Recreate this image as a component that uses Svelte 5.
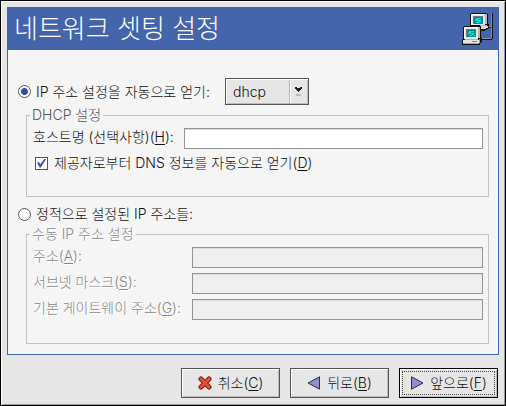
<script lang="ts">
  let mode: string = $state('auto');
  let protocol: string = $state('dhcp');
  let hostname: string = $state('');
  let autoDns: boolean = $state(true);

  const fields = [
    { id: 'address', label: '주소', key: 'A' },
    { id: 'netmask', label: '서브넷 마스크', key: 'S' },
    { id: 'gateway', label: '기본 게이트웨이 주소', key: 'G' }
  ];
</script>

<div class="window">
  <main class="panel">
    <header>
      <h1>네트워크 셋팅 설정</h1>
      <svg class="logo" viewBox="0 0 32 32" shape-rendering="crispEdges" aria-hidden="true">
        <!-- cable -->
        <path d="M30 0h1v26h-1v1H19v-1h11z M26 13h4v2h-4z" fill="#111" />
        <path d="M29 0h1v25h-1z M19 25h10v1H19z M27 13h2v1h-2z" fill="#8d8d8d" />
        <!-- back computer -->
        <path d="M9 0h16v1h1v10h1v5h-2v1h-2v1h-5V13H8V1h1z" fill="#111" />
        <path d="M9 1h14v11H9z" fill="#e6e6e6" />
        <path d="M9 1h14v1H9z M9 2h1v10H9z" fill="#fff" />
        <path d="M23 1h2v10h-2z M18 12h7v1h-7z" fill="#b9b9b9" />
        <path d="M19 13h7v2h-2v1h-5z" fill="#d8d8d8" />
        <path d="M11 3h10v8H11z" fill="#777" />
        <path d="M12 4h9v7h-9z" fill="#008f8f" />
        <path d="M14 5h5v1h-5z M13 6h3v2h-3z M16 7h3v2h-3z M14 9h3v1h-3z M19 9h1v1h-1z" fill="#00dcdc" />
        <!-- front computer -->
        <path d="M2 13h16v1h1v11h1v4h-1v1h-1v2H0v-6h1V14h1z" fill="#111" />
        <path d="M2 14h14v12H2z" fill="#e6e6e6" />
        <path d="M2 14h14v1H2z M2 15h1v11H2z" fill="#fff" />
        <path d="M16 14h2v11h-2z M3 26h13v1H3z" fill="#b5b5b5" />
        <path d="M1 27h16v3H1z" fill="#e4e4e4" />
        <path d="M1 30h16v1H1z M17 26h1v4h-1z" fill="#a3a3a3" />
        <path d="M10 28h5v1h-5z" fill="#888" />
        <path d="M4 16h10v8H4z" fill="#777" />
        <path d="M5 17h9v7H5z" fill="#008f8f" />
        <path d="M7 18h5v1H7z M6 19h3v2H6z M9 20h3v2H9z M7 22h3v1H7z M12 22h1v1h-1z" fill="#00dcdc" />
      </svg>
    </header>

    <form id="network">
      <div class="choice auto">
        <input type="radio" id="auto" name="mode" value="auto" bind:group={mode} />
        <label for="auto">IP 주소 설정을 자동으로 얻기:</label>
        <span class="combo">
          <select bind:value={protocol} aria-label="IP">
            <option value="dhcp">dhcp</option>
            <option value="bootp">bootp</option>
            <option value="dialup">dialup</option>
          </select>
          <span class="arrow">
            <svg viewBox="0 0 7 9" width="7" height="9" shape-rendering="crispEdges">
              <path d="M0 0h2v1h3V0h2v2H6v1H5v1H4v1H3V4H2V3H1V2H0z" fill="#222" />
              <path d="M1 7h5v2H1z" fill="#bbb" />
            </svg>
          </span>
        </span>
      </div>

      <fieldset>
        <legend>DHCP 설정</legend>
        <div class="row host">
          <label for="hostname">호스트명 (선택사항)(<u>H</u>):</label>
          <input type="text" id="hostname" bind:value={hostname} />
        </div>
        <div class="check">
          <input type="checkbox" id="dns" bind:checked={autoDns} />
          <label for="dns">제공자로부터 DNS 정보를 자동으로 얻기(<u>D</u>)</label>
        </div>
      </fieldset>

      <div class="choice">
        <input type="radio" id="static" name="mode" value="static" bind:group={mode} />
        <label for="static">정적으로 설정된 IP 주소들:</label>
      </div>

      <fieldset class="manual" disabled={mode !== 'static'}>
        <legend>수동 IP 주소 설정</legend>
        {#each fields as field}
          <div class="row">
            <label for={field.id}>{field.label}(<u>{field.key}</u>):</label>
            <input type="text" id={field.id} />
          </div>
        {/each}
      </fieldset>
    </form>
  </main>

  <div class="buttons">
    <button type="button">
      <svg viewBox="0 0 14 14" width="14" height="14">
        <path d="M3 3l8 8M11 3l-8 8" stroke="#7d2015" stroke-width="5" stroke-linecap="round" />
        <path d="M3 3l8 8M11 3l-8 8" stroke="#e8502f" stroke-width="3" stroke-linecap="round" />
      </svg>
      <span>취소(<u>C</u>)</span>
    </button>
    <button type="button">
      <svg viewBox="0 0 14 14" width="14" height="14">
        <path d="M12.500 .8v12.400L1 7z" fill="#8c90cf" stroke="#2c2c48" />
      </svg>
      <span>뒤로(<u>B</u>)</span>
    </button>
    <button type="submit" form="network" class="default">
      <svg viewBox="0 0 14 14" width="14" height="14">
        <path d="M1.500 .8v12.400L13 7z" fill="#8c90cf" stroke="#2c2c48" />
      </svg>
      <span>앞으로(<u>F</u>)</span>
    </button>
  </div>
</div>

<style>
  .window {
    box-sizing: border-box;
    min-height: 100vh;
    padding: 6px;
    border: 1px solid #000;
    box-shadow: inset 1px 1px #fff, inset -1px -1px #999;
    background: #e6e6e6;
    color: #111;
    font-family: Inter, "Noto Sans CJK KR", sans-serif;
    font-size: 14px;
    font-weight: 300;
    line-height: 18px;
  }

  .panel {
    border: 1px solid #4464ac;
    background: #f5f5f5;
  }

  header {
    display: flex;
    align-items: center;
    justify-content: space-between;
    height: 42px;
    padding: 0 4px 0 6px;
    background: #4464ac;
  }

  h1 {
    margin: 0;
    color: #fff;
    font-size: 26px;
    font-weight: 300;
    line-height: 36px;
  }

  .logo {
    width: 32px;
    height: 32px;
  }

  form {
    padding: 28px 9px 10px 10px;
  }

  u {
    text-underline-offset: 2px;
    text-decoration-thickness: 1px;
    text-decoration-skip-ink: none;
  }

  .choice,
  .check {
    display: flex;
    align-items: center;
    gap: 6px;
  }

  .choice {
    gap: 5px;
    height: 20px;
  }

  .choice.auto {
    height: 27px;
  }

  .choice.auto label {
    min-width: 183px;
  }

  input {
    box-sizing: border-box;
    margin: 0;
    appearance: none;
    background: #fff;
    font: inherit;
  }

  input[type="radio"] {
    width: 13px;
    height: 13px;
    border: 1px solid #555;
    border-radius: 50%;
  }

  input[type="radio"]:checked {
    background: radial-gradient(circle, #2f4f9c 0 3px, #fff 4px);
  }

  input[type="checkbox"] {
    display: grid;
    place-items: center;
    width: 13px;
    height: 13px;
    border: 1px solid #555;
  }

  input[type="checkbox"]:checked::before {
    content: "";
    width: 9px;
    height: 9px;
    background: #3457a8;
    clip-path: polygon(0 45%, 20% 40%, 38% 62%, 85% 0, 100% 8%, 42% 100%, 30% 100%);
  }

  .combo {
    position: relative;
    margin-left: 1px;
  }

  select {
    display: block;
    box-sizing: border-box;
    width: 84px;
    height: 27px;
    padding: 0 24px 0 7px;
    appearance: none;
    border: 1px solid #555;
    border-radius: 0;
    background: #e6e6e6;
    box-shadow: inset 1px 1px #fff, inset -1px -1px #bbb;
    color: inherit;
    font: inherit;
  }

  .arrow {
    position: absolute;
    top: 2px;
    right: 2px;
    bottom: 2px;
    display: grid;
    place-items: center;
    width: 17px;
    border-left: 1px solid #bbb;
    box-shadow: inset 1px 0 #fff;
    pointer-events: none;
  }

  fieldset {
    min-width: 0;
    margin: 1px 0 7px 8px;
    padding: 4px 5px 24px 6px;
    border: 1px solid #c3c3c3;
  }

  legend {
    margin-left: -3px;
    padding: 0 2px;
    color: #555;
  }

  .row {
    display: grid;
    grid-template-columns: 159px 1fr;
    align-items: start;
    margin-bottom: 5px;
  }

  .row.host {
    grid-template-columns: 151px 1fr;
  }

  .row input {
    width: 100%;
    height: 21px;
    padding: 0 4px;
    border: 1px solid #949494;
    box-shadow: inset 0 1px #ddd;
  }

  .check {
    padding-left: 2px;
  }

  .manual {
    margin-bottom: 0;
    padding-bottom: 18px;
  }

  .manual:disabled label,
  .manual:disabled legend {
    color: #888;
    text-shadow: 1px 1px #fff;
  }

  .row input:disabled {
    background: #efefef;
  }

  .buttons {
    display: flex;
    justify-content: flex-end;
    gap: 10px;
    padding: 13px 1px 0;
  }

  button {
    display: flex;
    align-items: center;
    justify-content: center;
    gap: 6px;
    width: 99px;
    height: 30px;
    padding: 0;
    border: 1px solid #555;
    background: #e6e6e6;
    box-shadow: inset 1px 1px #fff, inset -1px -1px #bbb;
    color: inherit;
    font: inherit;
  }

  .default {
    border-color: #000;
    outline: 1px dotted #444;
    outline-offset: -4px;
  }
</style>
